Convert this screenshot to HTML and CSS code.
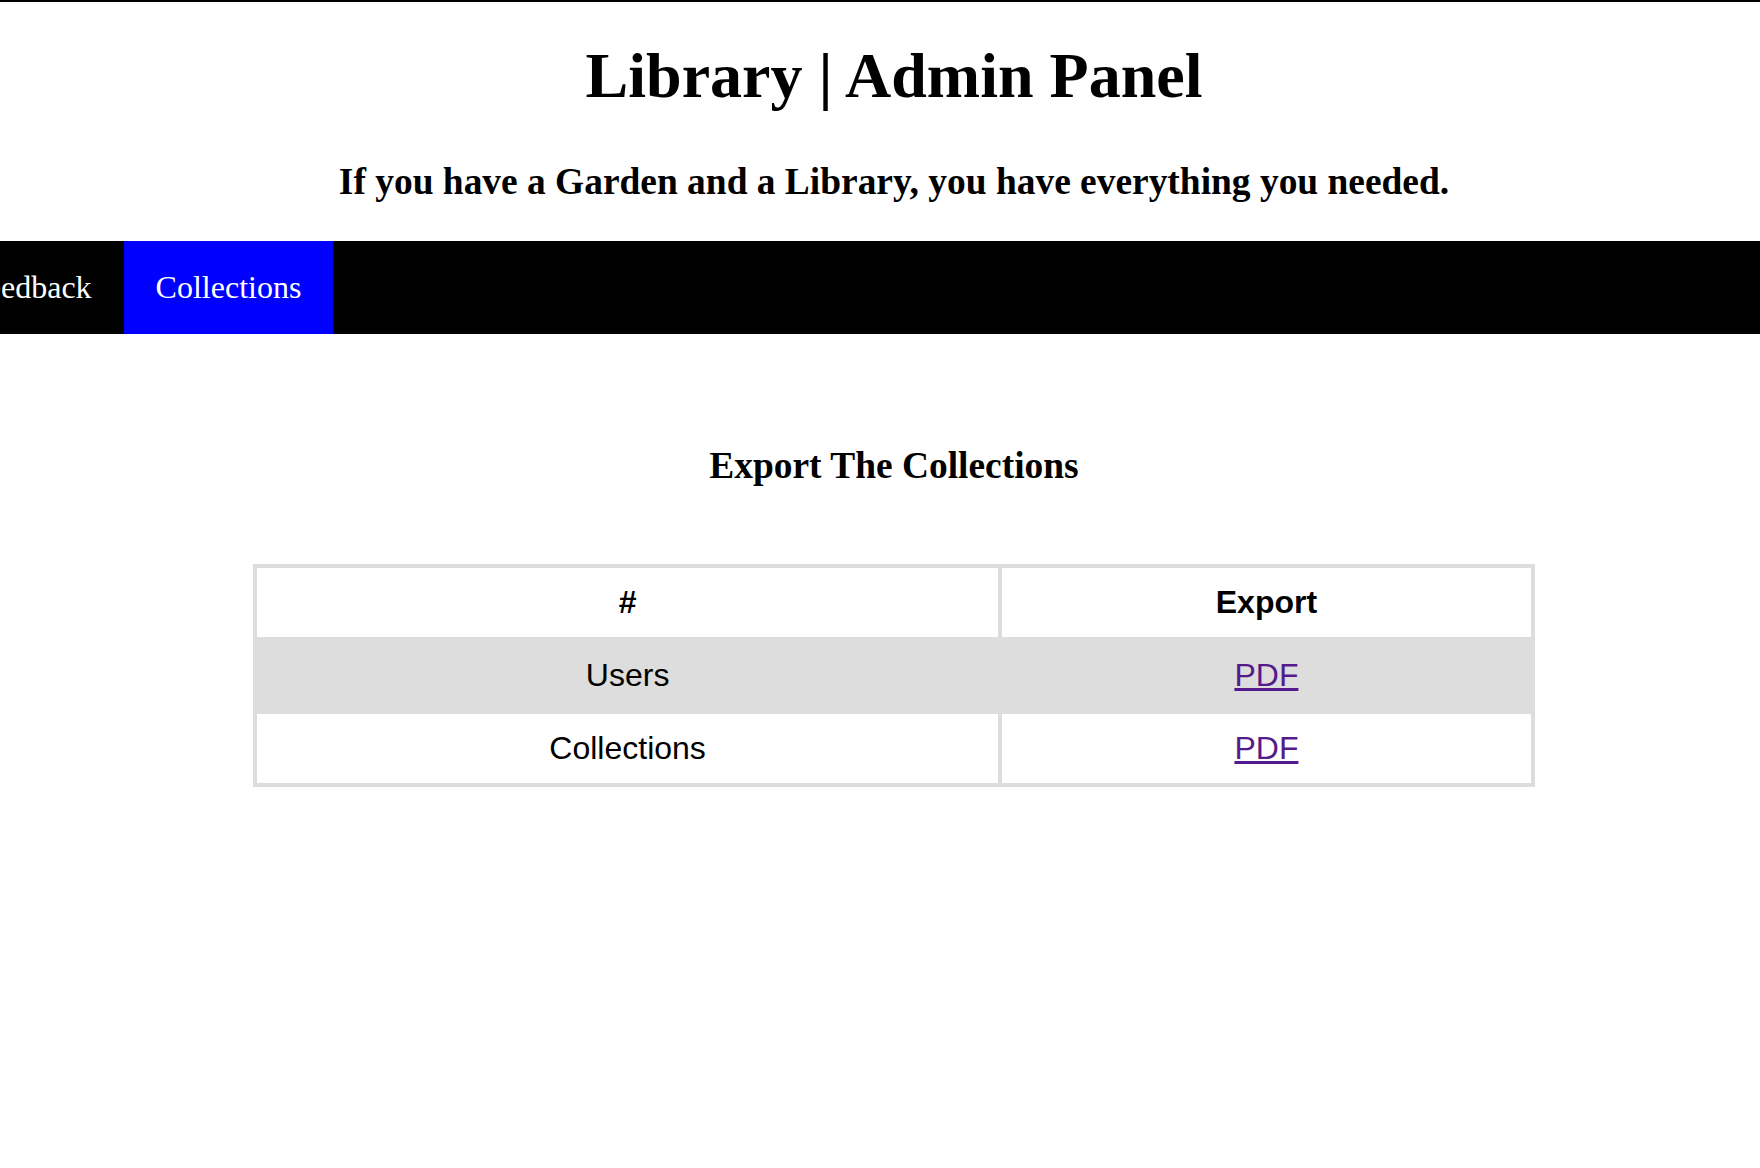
FILE: index.html
```html
<!DOCTYPE html>
<html lang="en">
<head>
<meta charset="utf-8">
<title>Library | Admin Panel</title>
<link rel="stylesheet" href="styles.css">
</head>
<body>
<div class="topline"></div>
<header class="site-header">
  <h1 class="site-title">Library | Admin Panel</h1>
  <h3 class="site-quote">If you have a Garden and a Library, you have everything you needed.</h3>
</header>
<nav class="topnav">
  <div class="topnav-track">
    <a class="topnav-item" href="#">Feedback</a>
    <a class="topnav-item active" href="#">Collections</a>
  </div>
</nav>
<main class="content">
  <h3 class="section-title">Export The Collections</h3>
  <table class="export-table">
    <colgroup>
      <col class="col-name">
      <col class="col-export">
    </colgroup>
    <tr>
      <th>#</th>
      <th>Export</th>
    </tr>
    <tr>
      <td>Users</td>
      <td><a class="pdf-link" href="#">PDF</a></td>
    </tr>
    <tr>
      <td>Collections</td>
      <td><a class="pdf-link" href="#">PDF</a></td>
    </tr>
  </table>
</main>
</body>
</html>
```

FILE: styles.css
```css
html, body {
  margin: 0;
  padding: 0;
  background: #ffffff;
}

body {
  font-family: "Liberation Serif", "Times New Roman", serif;
  color: #000000;
}

.topline {
  height: 2px;
  background: #000000;
}

.site-header {
  padding-left: 28px;
  text-align: center;
}

.site-title {
  font-size: 64px;
  font-weight: bold;
  margin: 37px 0 47px;
}

.site-quote {
  font-size: 37.44px;
  font-weight: bold;
  margin: 0 0 38px;
}

.topnav {
  background: #000000;
  overflow: hidden;
}

.topnav-track {
  display: flex;
  margin-left: -63px;
}

.topnav-item {
  display: block;
  padding: 28px 32px;
  font-size: 32px;
  color: #ffffff;
  text-decoration: none;
  white-space: nowrap;
}

.topnav-item.active {
  background: #0000ff;
}

.content {
  padding-left: 28px;
  padding-top: 110px;
}

.section-title {
  font-size: 37.44px;
  font-weight: bold;
  text-align: center;
  margin: 0 0 77px;
}

.export-table {
  width: 74%;
  margin: 0 auto;
  border-collapse: collapse;
  font-family: "Liberation Sans", Arial, sans-serif;
  font-size: 32px;
}

.col-name {
  width: 58.3%;
}

.export-table th,
.export-table td {
  border: 4px solid #dddddd;
  padding: 16px;
  text-align: center;
}

.export-table th {
  font-weight: bold;
}

.export-table tr:nth-child(even) {
  background: #dddddd;
}

.pdf-link {
  color: #551a8b;
  text-decoration: underline;
}
```
